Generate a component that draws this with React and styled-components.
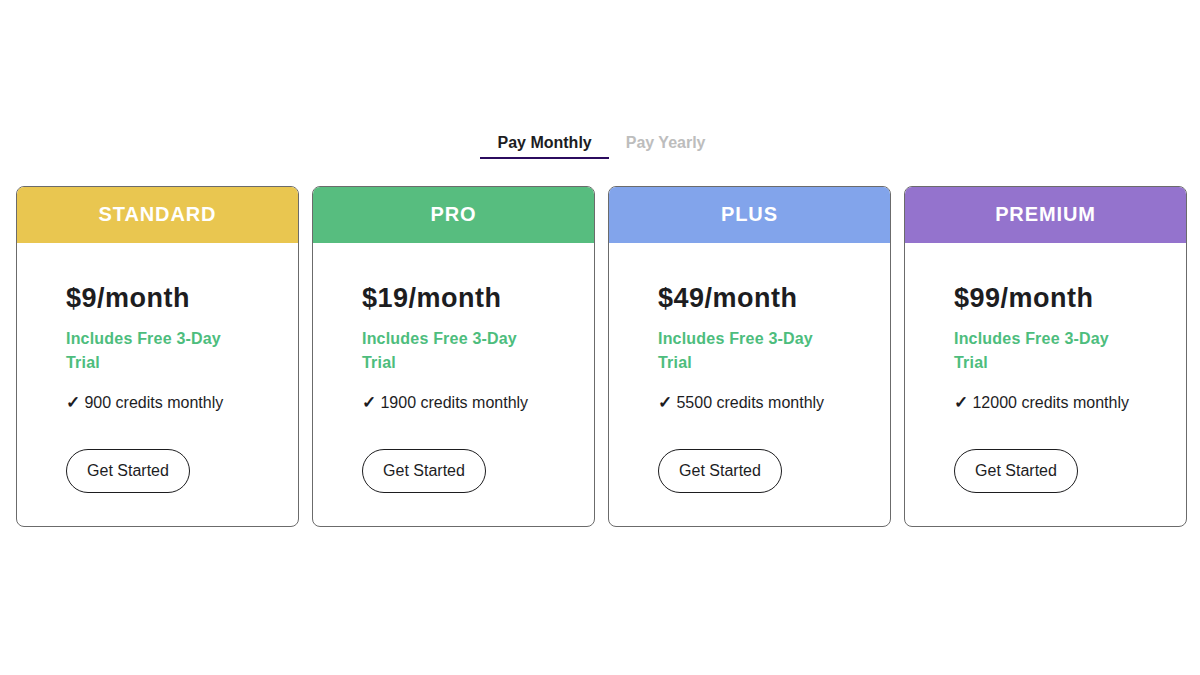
import React, { useState } from 'react'
import styled, { createGlobalStyle } from 'styled-components';

const GlobalStyle = createGlobalStyle`
  body {
    margin: 0;
    background: #fff;
    font-family: "Liberation Sans", Arial, sans-serif;
    color: #1d1d1f;
  }
`;

const Page = styled.div`
  width: 1200px;
  height: 675px;
  padding-top: 128px;
  box-sizing: border-box;
`;

const Tabs = styled.div`
  display: flex;
  justify-content: center;
  padding-left: 3px;
  margin-bottom: 27px;
`;

const Tab = styled.button`
  background: none;
  border: none;
  border-bottom: 2px solid ${p => (p.active ? '#2b0b5e' : 'transparent')};
  padding: 6px 17px 5px;
  font-family: inherit;
  font-size: 16px;
  font-weight: 700;
  color: ${p => (p.active ? '#1d1d1f' : '#bdbdbd')};
  cursor: pointer;
`;

const Row = styled.div`
  display: grid;
  grid-template-columns: repeat(4, 283px);
  gap: 13px;
  padding-left: 16px;
`;

const Card = styled.div`
  border: 1px solid #6b6b6b;
  border-radius: 8px;
  overflow: hidden;
  background: #fff;
`;

const CardHeader = styled.div`
  height: 56px;
  display: flex;
  align-items: center;
  justify-content: center;
  padding-bottom: 2px;
  box-sizing: border-box;
  background: ${p => p.color};
  color: #fff;
  font-size: 20px;
  font-weight: 700;
  letter-spacing: 0.9px;
`;

const CardBody = styled.div`
  padding: 39px 49px 33px;
`;

const Price = styled.div`
  font-size: 27px;
  font-weight: 700;
  line-height: 32px;
  letter-spacing: 0.5px;
  color: #1d1d1f;
`;

const Trial = styled.div`
  margin-top: 13px;
  font-size: 16px;
  font-weight: 700;
  line-height: 24px;
  letter-spacing: 0.2px;
  color: #4dbd7d;
`;

const Credits = styled.div`
  margin-top: 16px;
  font-size: 16px;
  line-height: 24px;
  color: #1d1d1f;
`;

const Check = styled.span`
  font-size: 17px;
  font-weight: 700;
`;

const StartButton = styled.button`
  margin-top: 34px;
  width: 124px;
  height: 44px;
  padding: 0;
  border: 1.5px solid #1d1d1f;
  border-radius: 22px;
  background: #fff;
  font-family: inherit;
  font-size: 16px;
  color: #1d1d1f;
  cursor: pointer;
`;

const plans = [
  { name: 'STANDARD', color: '#e9c650', price: '$9', credits: 900 },
  { name: 'PRO', color: '#57bd7f', price: '$19', credits: 1900 },
  { name: 'PLUS', color: '#82a4eb', price: '$49', credits: 5500 },
  { name: 'PREMIUM', color: '#9473cd', price: '$99', credits: 12000 },
];

const App = () => {
    const [yearly, setYearly] = useState(false);

    return (
        <>
        <GlobalStyle />
        <Page>
            <Tabs>
                <Tab active={!yearly} onClick={() => setYearly(false)}>Pay Monthly</Tab>
                <Tab active={yearly} onClick={() => setYearly(true)}>Pay Yearly</Tab>
            </Tabs>
            <Row>
                {plans.map(plan => (
                    <Card key={plan.name}>
                        <CardHeader color={plan.color}>{plan.name}</CardHeader>
                        <CardBody>
                            <Price>{plan.price}/month</Price>
                            <Trial>Includes Free 3-Day Trial</Trial>
                            <Credits><Check>✓</Check> {plan.credits} credits monthly</Credits>
                            <StartButton>Get Started</StartButton>
                        </CardBody>
                    </Card>
                ))}
            </Row>
        </Page>
        </>
    )
}

export default App
